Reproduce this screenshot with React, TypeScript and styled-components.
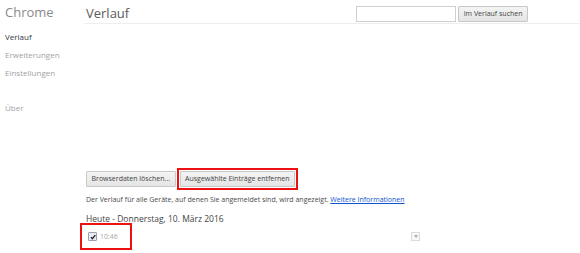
import { createGlobalStyle } from 'styled-components';
import styled from 'styled-components';

const GlobalStyle = createGlobalStyle`
  html, body {
    margin: 0;
    padding: 0;
    background: #fff;
  }
  body {
    font-family: "Open Sans", "Liberation Sans", sans-serif;
    color: #303942;
  }
`;

const Page = styled.div`
  display: flex;
  width: 580px;
  height: 253px;
  overflow: hidden;
`;

const Sidebar = styled.nav`
  width: 84px;
  flex-shrink: 0;
  padding: 4px 0 0 5px;
  box-sizing: border-box;
`;

const Brand = styled.div`
  font-size: 13px;
  color: #8a8a8a;
  line-height: 17px;
  margin-bottom: 11px;
`;

const NavItem = styled.div<{ $active?: boolean; $gap?: number }>`
  font-size: 8px;
  line-height: 10px;
  margin-top: ${(p) => p.$gap ?? 8}px;
  color: ${(p) => (p.$active ? '#303942' : '#a2a2a2')};
`;

const Main = styled.main`
  flex: 1;
  display: flex;
  flex-direction: column;
`;

const Header = styled.header`
  display: flex;
  align-items: flex-start;
  justify-content: space-between;
  height: 24px;
  box-sizing: border-box;
  padding: 6px 52px 0 2px;
  border-bottom: 1px solid #eeeeee;
`;

const Title = styled.h1`
  margin: -1px 0 0;
  font-size: 13px;
  line-height: 17px;
  font-weight: 400;
  color: #5a5a5a;
`;

const Search = styled.div`
  display: flex;
  gap: 2px;
  align-items: center;
`;

const SearchInput = styled.div`
  width: 98px;
  height: 14px;
  border: 1px solid #cfcfcf;
  background: #fff;
`;

const Button = styled.button`
  font-family: "Open Sans", "Liberation Sans", sans-serif;
  font-size: 7px;
  color: #444;
  height: 16px;
  padding: 0 4.5px;
  border: 1px solid #c8c8c8;
  border-radius: 1px;
  background: linear-gradient(#f4f4f4, #e4e4e4);
  line-height: 14px;
  white-space: nowrap;
`;

const Content = styled.section`
  padding: 144px 0 0 2px;
  display: flex;
  flex-direction: column;
`;

const Actions = styled.div`
  display: flex;
  gap: 1px;
  align-items: center;
`;

const Highlight = styled.div`
  border: 2.5px solid #ee1111;
  padding: 1px;
  display: flex;
`;

const Info = styled.p`
  margin: 5px 0 0;
  font-size: 7px;
  color: #4a4a4a;
  line-height: 10px;
`;

const Link = styled.a`
  color: #1155cc;
  text-decoration: underline;
`;

const DayTitle = styled.h2`
  margin: 8px 0 0;
  font-size: 8.5px;
  font-weight: 400;
  color: #444;
  line-height: 12px;
`;

const Row = styled.div`
  display: flex;
  align-items: center;
  width: 340px;
  margin-left: -6px;
  margin-top: -2px;
`;

const RowHighlight = styled.div`
  display: flex;
  align-items: center;
  gap: 3px;
  width: 42px;
  height: 23px;
  border: 2.5px solid #ee1111;
  padding-left: 6px;
`;

const Check = styled.span`
  width: 7px;
  height: 7px;
  border: 1px solid #9aa0b0;
  border-radius: 1px;
  background: #e8ecf6;
  display: flex;
  align-items: center;
  justify-content: center;
`;

const Time = styled.span`
  font-size: 7px;
  color: #a8a8a8;
`;

const MenuButton = styled.span`
  margin-left: auto;
  width: 7px;
  height: 7px;
  border: 1px solid #dcdcdc;
  background: #f8f8f8;
  display: flex;
  align-items: center;
  justify-content: center;
`;

export default function App() {
  return (
    <>
      <GlobalStyle />
      <Page>
        <Sidebar>
          <Brand>Chrome</Brand>
          <NavItem $active $gap={0}>Verlauf</NavItem>
          <NavItem>Erweiterungen</NavItem>
          <NavItem>Einstellungen</NavItem>
          <NavItem $gap={25}>Über</NavItem>
        </Sidebar>
        <Main>
          <Header>
            <Title>Verlauf</Title>
            <Search>
              <SearchInput />
              <Button>Im Verlauf suchen</Button>
            </Search>
          </Header>
          <Content>
            <Actions>
              <Button>Browserdaten löschen...</Button>
              <Highlight>
                <Button>Ausgewählte Einträge entfernen</Button>
              </Highlight>
            </Actions>
            <Info>
              Der Verlauf für alle Geräte, auf denen Sie angemeldet sind, wird angezeigt.{' '}
              <Link>Weitere Informationen</Link>
            </Info>
            <DayTitle>Heute - Donnerstag, 10. März 2016</DayTitle>
            <Row>
              <RowHighlight>
                <Check>
                  <svg width="6" height="6" viewBox="0 0 10 10">
                    <path d="M1.5 5.2 L4 7.8 L8.8 1.8" fill="none" stroke="#222" strokeWidth="2.2" />
                  </svg>
                </Check>
                <Time>10:46</Time>
              </RowHighlight>
              <MenuButton>
                <svg width="4" height="3" viewBox="0 0 4 3">
                  <path d="M0 0 H4 L2 3 Z" fill="#aaa" />
                </svg>
              </MenuButton>
            </Row>
          </Content>
        </Main>
      </Page>
    </>
  );
}
